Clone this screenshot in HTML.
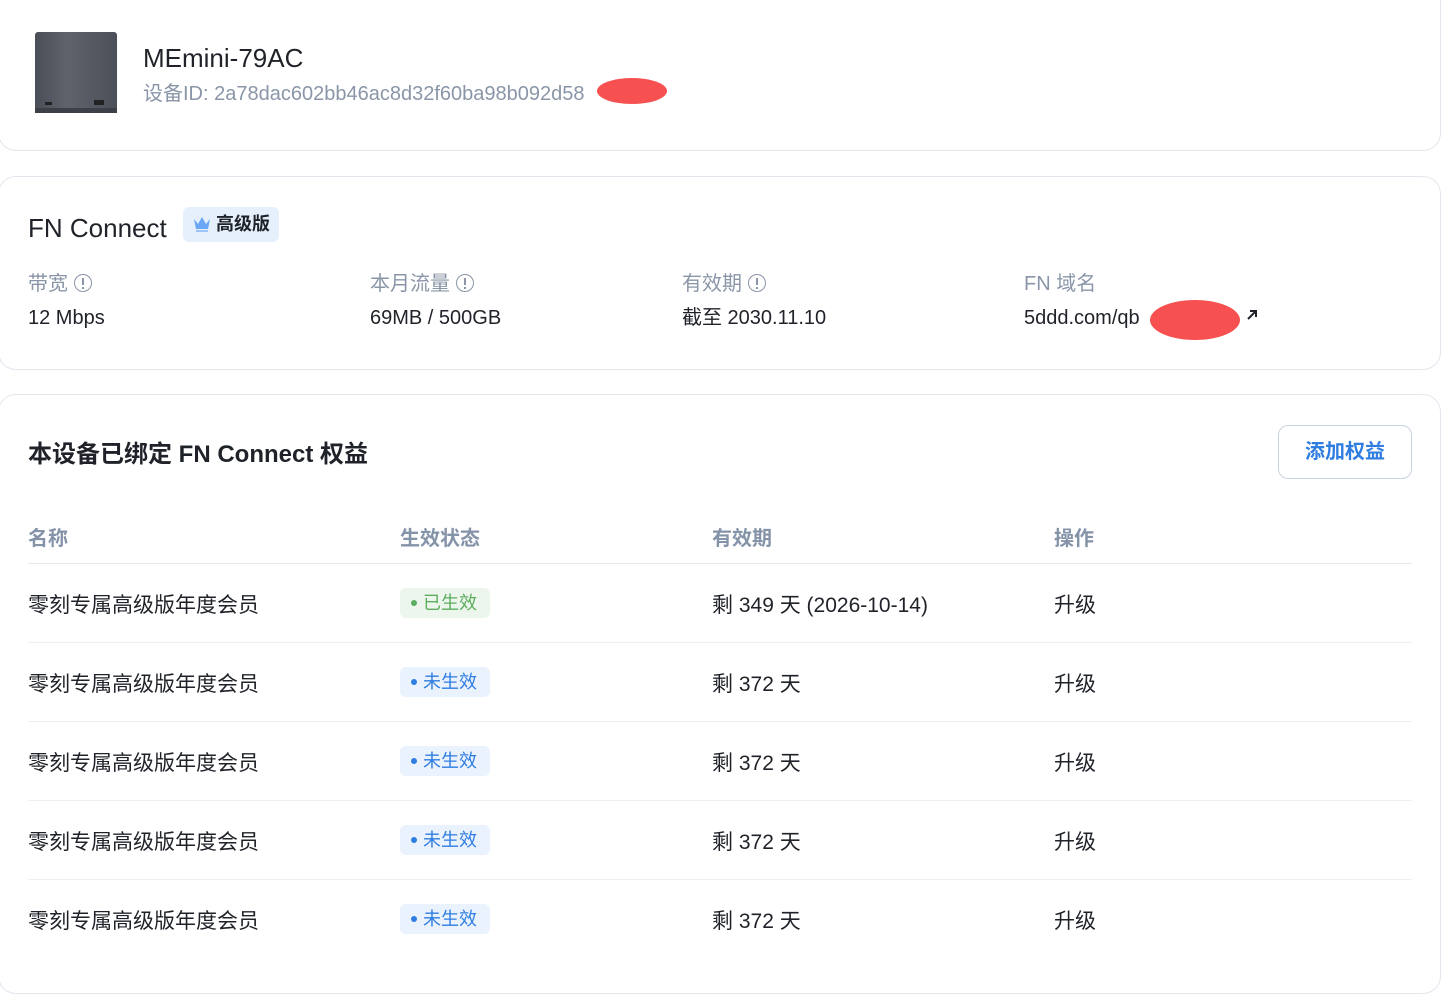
<!DOCTYPE html>
<html><head><meta charset="utf-8"><style>
*{margin:0;padding:0;box-sizing:border-box}
body{width:1443px;height:972px;overflow:hidden;background:#fff;font-family:"Liberation Sans","Noto Sans CJK SC",sans-serif;color:#1f2329;position:relative}
.card{position:absolute;left:-2px;width:1443px;border:1px solid #e2e7ee;border-radius:18px;background:#fff}
.abs{position:absolute;white-space:nowrap;line-height:1.4}
.lbl{color:#8a96a8;font-size:20px}
.val{font-size:20px;color:#1f2329}
.info{display:inline-block;width:18px;height:18px;border:1.6px solid #8a96a8;border-radius:50%;vertical-align:-2px;margin-left:6px;position:relative}
.info:after{content:"";position:absolute;left:6.6px;top:3px;width:2px;height:7px;background:#8a96a8}
.info:before{content:"";position:absolute;left:6.6px;top:11.5px;width:2px;height:2px;background:#8a96a8}
.th{font-size:20px;font-weight:bold;color:#8593a8;top:525px}
.row{position:absolute;left:28px;width:1384px;height:1px;background:#eceff3}
.cell{font-size:21px;color:#1f2329}
.badge{position:absolute;left:400px;width:90px;height:30px;border-radius:6px;font-size:18px;line-height:30px;padding-left:11px}
.badge i{display:inline-block;width:6px;height:6px;border-radius:50%;margin-right:6px;vertical-align:3px}
.g{background:#edf6ec;color:#5cad5e}.g i{background:#5cad5e}
.b{background:#e9f2fd;color:#2f7de1}.b i{background:#2f7de1}
</style></head><body>
<div class="card" style="top:-20px;height:171px"></div>
<div class="abs" style="left:35px;top:32px;width:82px;height:81px;background:linear-gradient(90deg,#4a4e57,#5f636c 40%,#4b4f58);border-radius:3px"></div>
<div class="abs" style="left:35px;top:108px;width:82px;height:5px;background:#3d4047"></div>
<div class="abs" style="left:45px;top:102px;width:7px;height:3px;background:#222"></div>
<div class="abs" style="left:94px;top:100px;width:10px;height:5px;background:#222"></div>
<div class="abs" style="left:143px;top:40px;font-size:26px;color:#1f2329">MEmini-79AC</div>
<div class="abs" style="left:143px;top:80px;font-size:20px;color:#8a96a8">设备ID: 2a78dac602bb46ac8d32f60ba98b092d58</div>
<div class="abs" style="left:597px;top:78px;width:70px;height:26px;background:#f75050;border-radius:50%"></div>

<div class="card" style="top:176px;height:194px"></div>
<div class="abs" style="left:28px;top:210px;font-size:26px;color:#1f2329">FN Connect</div>
<div class="abs" style="left:183px;top:207px;width:96px;height:35px;background:#e6effc;border-radius:6px;font-size:18px;font-weight:bold;line-height:35px;padding-left:33px;color:#1f2329">高级版</div>
<svg class="abs" style="left:192px;top:215px" width="20" height="18" viewBox="0 0 20 18"><path d="M2 4 L6 9 L10 2 L14 9 L18 4 L16 14 L4 14Z" fill="#6aa7f5"/><rect x="4" y="15" width="12" height="2" fill="#9cc4f7"/></svg>
<div class="abs lbl" style="left:28px;top:270px">带宽<span class="info"></span></div>
<div class="abs val" style="left:28px;top:304px">12 Mbps</div>
<div class="abs lbl" style="left:370px;top:270px">本月流量<span class="info"></span></div>
<div class="abs val" style="left:370px;top:304px">69MB / 500GB</div>
<div class="abs lbl" style="left:682px;top:270px">有效期<span class="info"></span></div>
<div class="abs val" style="left:682px;top:304px">截至 2030.11.10</div>
<div class="abs lbl" style="left:1024px;top:270px">FN 域名</div>
<div class="abs val" style="left:1024px;top:304px">5ddd.com/qb</div>
<div class="abs" style="left:1150px;top:300px;width:90px;height:40px;background:#f75050;border-radius:50%"></div>
<svg class="abs" style="left:1245px;top:308px" width="14" height="14" viewBox="0 0 14 14"><path d="M3 11 L11 3 M5 3 H11 V9" stroke="#1f2329" stroke-width="2" fill="none"/></svg>

<div class="card" style="top:394px;height:600px"></div>
<div class="abs" style="left:28px;top:438px;font-size:24px;font-weight:bold;color:#1f2329">本设备已绑定 FN Connect 权益</div>
<div class="abs" style="left:1278px;top:425px;width:134px;height:54px;border:1px solid #c9d3e0;border-radius:10px;text-align:center;line-height:52px;font-size:20px;font-weight:bold;color:#2f7de1">添加权益</div>
<div class="abs th" style="left:28px">名称</div>
<div class="abs th" style="left:400px">生效状态</div>
<div class="abs th" style="left:712px">有效期</div>
<div class="abs th" style="left:1054px">操作</div>
<div class="row" style="top:563px;background:#e4e8ee"></div>
<div class="row" style="top:642px"></div><div class="row" style="top:721px"></div><div class="row" style="top:800px"></div><div class="row" style="top:879px"></div>

<div class="abs cell" style="left:28px;top:591px">零刻专属高级版年度会员</div>
<div class="badge g" style="top:588px"><i></i>已生效</div>
<div class="abs cell" style="left:712px;top:591px">剩 349 天 (2026-10-14)</div>
<div class="abs cell" style="left:1054px;top:591px">升级</div>

<div class="abs cell" style="left:28px;top:670px">零刻专属高级版年度会员</div>
<div class="badge b" style="top:667px"><i></i>未生效</div>
<div class="abs cell" style="left:712px;top:670px">剩 372 天</div>
<div class="abs cell" style="left:1054px;top:670px">升级</div>

<div class="abs cell" style="left:28px;top:749px">零刻专属高级版年度会员</div>
<div class="badge b" style="top:746px"><i></i>未生效</div>
<div class="abs cell" style="left:712px;top:749px">剩 372 天</div>
<div class="abs cell" style="left:1054px;top:749px">升级</div>

<div class="abs cell" style="left:28px;top:828px">零刻专属高级版年度会员</div>
<div class="badge b" style="top:825px"><i></i>未生效</div>
<div class="abs cell" style="left:712px;top:828px">剩 372 天</div>
<div class="abs cell" style="left:1054px;top:828px">升级</div>

<div class="abs cell" style="left:28px;top:907px">零刻专属高级版年度会员</div>
<div class="badge b" style="top:904px"><i></i>未生效</div>
<div class="abs cell" style="left:712px;top:907px">剩 372 天</div>
<div class="abs cell" style="left:1054px;top:907px">升级</div>
</body></html>
